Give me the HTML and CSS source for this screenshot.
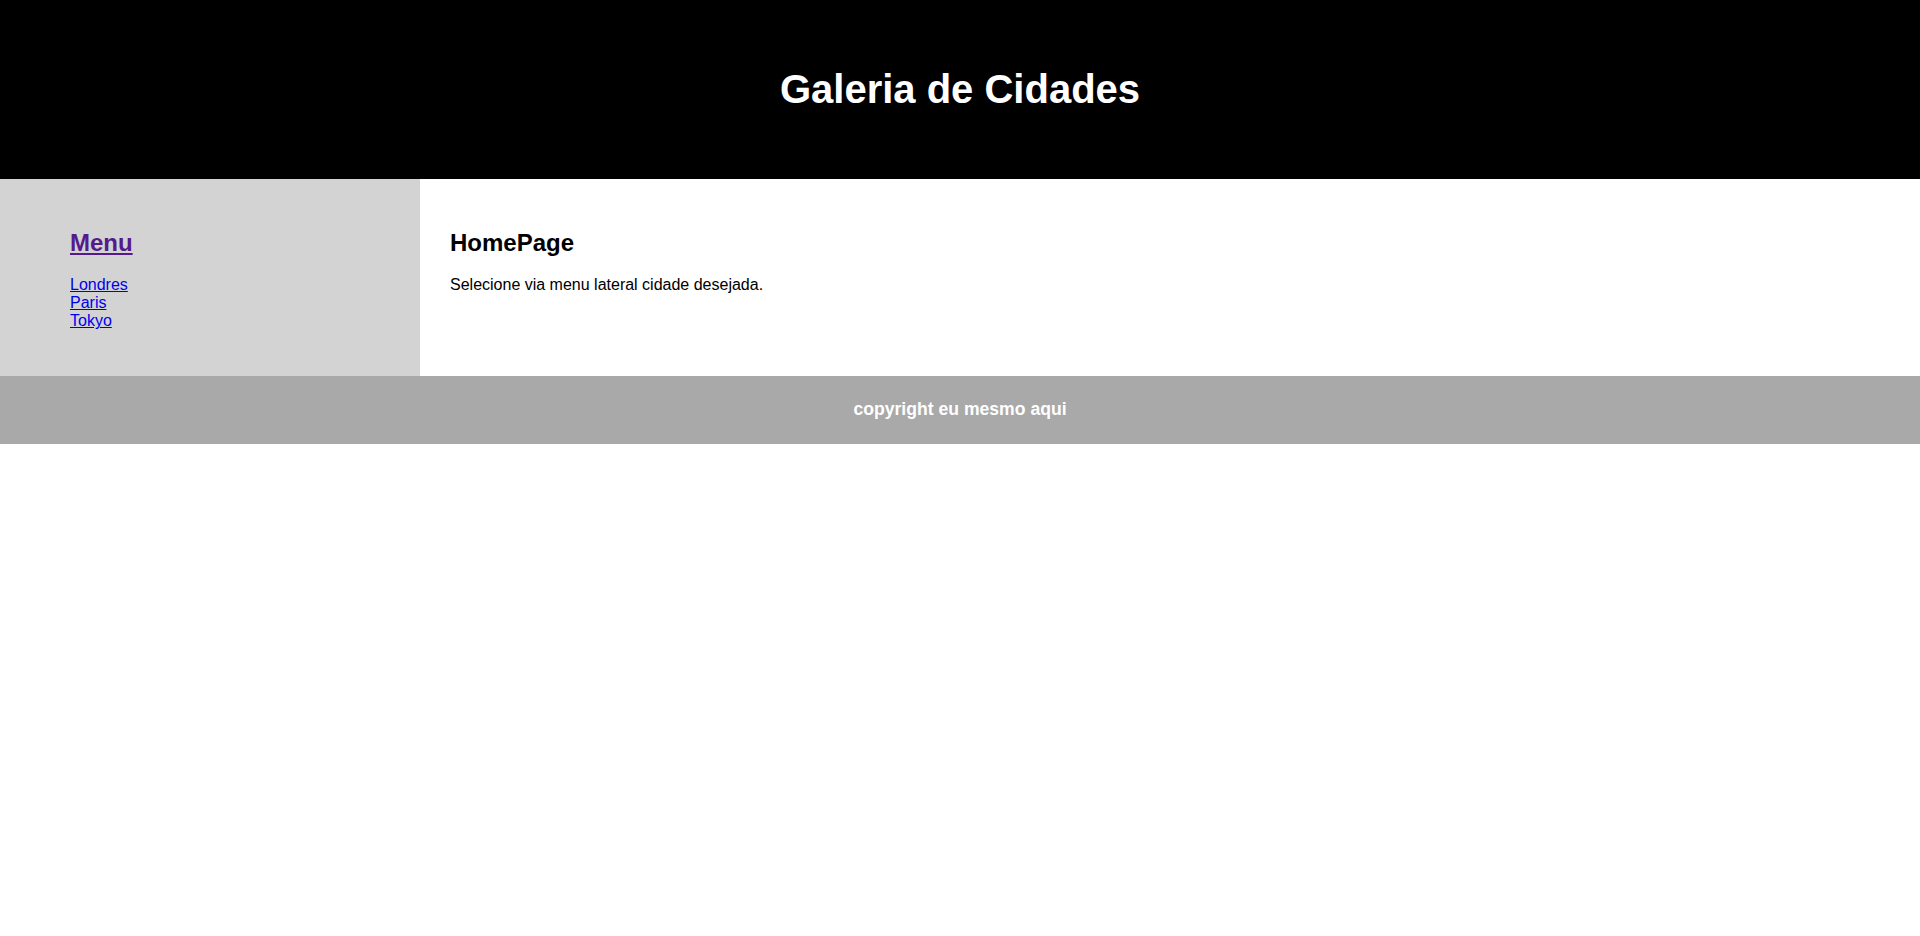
FILE: index.html
```html
<!DOCTYPE html>
<html lang="pt">
<head>
<meta charset="utf-8">
<title>Galeria de Cidades</title>
<link rel="stylesheet" href="styles.css">
</head>
<body>
<header class="topo">
  <h1 class="titulo">Galeria de Cidades</h1>
</header>
<div class="corpo">
  <nav class="lateral">
    <h2 class="menu-titulo"><a class="menu-link" href="#">Menu</a></h2>
    <ul class="lista">
      <li><a class="cidade" href="#">Londres</a></li>
      <li><a class="cidade" href="#">Paris</a></li>
      <li><a class="cidade" href="#">Tokyo</a></li>
    </ul>
  </nav>
  <main class="conteudo">
    <h2 class="secao">HomePage</h2>
    <p class="texto">Selecione via menu lateral cidade desejada.</p>
  </main>
</div>
<footer class="rodape">
  <p class="rodape-texto">copyright eu mesmo aqui</p>
</footer>
</body>
</html>
```

FILE: styles.css
```css
html, body {
  margin: 0;
  padding: 0;
  background: #ffffff;
}

body {
  font-family: "Liberation Sans", Arial, sans-serif;
  font-size: 16px;
  color: #000000;
}

.topo {
  background: #000000;
  padding: 40px 0;
  text-align: center;
}

.titulo {
  margin: 26.8px 0;
  font-size: 40px;
  font-weight: bold;
  color: #ffffff;
}

.corpo {
  display: flex;
}

.lateral {
  width: 350px;
  flex: 0 0 350px;
  background: #d3d3d3;
  padding: 30px 0 30px 70px;
}

.menu-titulo {
  margin: 19.92px 0;
  font-size: 24px;
  font-weight: bold;
}

.menu-link {
  color: #551a8b;
}

.lista {
  list-style: none;
  margin: 16px 0;
  padding: 0;
}

.cidade {
  color: #0000ee;
}

.conteudo {
  flex: 1;
  padding: 30px 30px;
}

.secao {
  margin: 19.92px 0;
  font-size: 24px;
  font-weight: bold;
}

.texto {
  margin: 16px 0;
}

.rodape {
  background: #a9a9a9;
  padding: 22.4px 0 24px;
  text-align: center;
}

.rodape-texto {
  margin: 0;
  font-size: 17.6px;
  font-weight: bold;
  color: #ffffff;
}
```
